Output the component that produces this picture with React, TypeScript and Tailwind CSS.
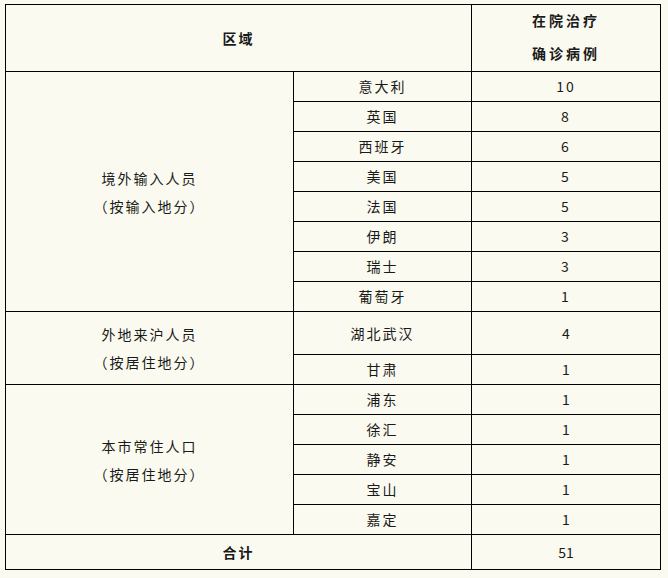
const overseas = [
  ["意大利", "10"],
  ["英国", "8"],
  ["西班牙", "6"],
  ["美国", "5"],
  ["法国", "5"],
  ["伊朗", "3"],
  ["瑞士", "3"],
  ["葡萄牙", "1"],
];

const local = [
  ["浦东", "1"],
  ["徐汇", "1"],
  ["静安", "1"],
  ["宝山", "1"],
  ["嘉定", "1"],
];

const cell = "border border-black text-center align-middle p-0";

function Group({ title, sub }: { title: string; sub: string }) {
  return (
    <div className="leading-[28px] tracking-[2px]">
      <p>{title}</p>
      <p>{sub}</p>
    </div>
  );
}

export default function App() {
  return (
    <div className="min-h-[578px] w-[668px] bg-[#fafaf0] pl-[5px] pt-[4px] font-['Noto_Sans_CJK_SC',sans-serif] text-[14px] text-[#1a1a1a]">
      <table className="w-[655px] table-fixed border-collapse">
        <colgroup>
          <col className="w-[288px]" />
          <col className="w-[178px]" />
          <col className="w-[189px]" />
        </colgroup>
        <tbody>
          <tr className="h-[67px]">
            <td colSpan={2} className={`${cell} font-bold tracking-[2px]`}>区域</td>
            <td className={`${cell} font-bold leading-[33px] tracking-[3px]`}>
              <p className="-mt-[2px]">在院治疗</p>
              <p>确诊病例</p>
            </td>
          </tr>
          {overseas.map(([name, n], i) => (
            <tr key={name} className="h-[30px]">
              {i === 0 && (
                <td rowSpan={overseas.length} className={cell}>
                  <Group title="境外输入人员" sub="（按输入地分）" />
                </td>
              )}
              <td className={`${cell} tracking-[2px]`}>{name}</td>
              <td className={`${cell} tracking-[2px]`}>{n}</td>
            </tr>
          ))}
          <tr className="h-[43px]">
            <td rowSpan={2} className={cell}>
              <Group title="外地来沪人员" sub="（按居住地分）" />
            </td>
            <td className={`${cell} tracking-[2px]`}>湖北武汉</td>
            <td className={cell}>4</td>
          </tr>
          <tr className="h-[30px]">
            <td className={`${cell} tracking-[2px]`}>甘肃</td>
            <td className={cell}>1</td>
          </tr>
          {local.map(([name, n], i) => (
            <tr key={name} className="h-[30px]">
              {i === 0 && (
                <td rowSpan={local.length} className={cell}>
                  <Group title="本市常住人口" sub="（按居住地分）" />
                </td>
              )}
              <td className={`${cell} tracking-[2px]`}>{name}</td>
              <td className={cell}>{n}</td>
            </tr>
          ))}
          <tr className="h-[35px]">
            <td colSpan={2} className={`${cell} font-bold tracking-[2px]`}>合计</td>
            <td className={cell}>51</td>
          </tr>
        </tbody>
      </table>
    </div>
  );
}
